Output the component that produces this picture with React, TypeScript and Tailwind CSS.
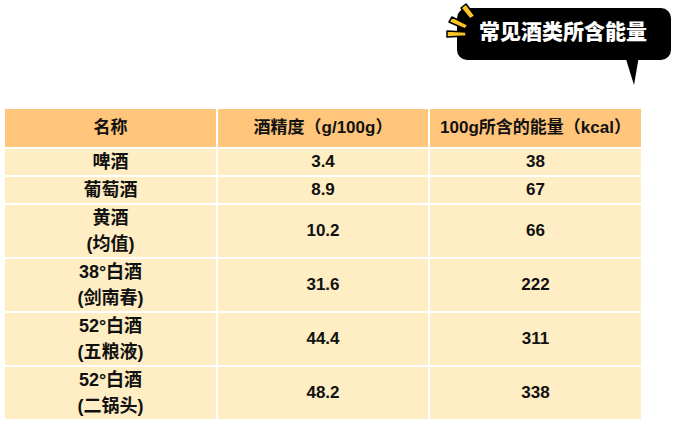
import React from "react";

const font = { fontFamily: '"Liberation Sans", "Noto Sans CJK SC", sans-serif' };

type Row = { name: string[]; abv: string; kcal: string };

const rows: Row[] = [
  { name: ["啤酒"], abv: "3.4", kcal: "38" },
  { name: ["葡萄酒"], abv: "8.9", kcal: "67" },
  { name: ["黄酒", "(均值)"], abv: "10.2", kcal: "66" },
  { name: ["38°白酒", "(剑南春)"], abv: "31.6", kcal: "222" },
  { name: ["52°白酒", "(五粮液)"], abv: "44.4", kcal: "311" },
  { name: ["52°白酒", "(二锅头)"], abv: "48.2", kcal: "338" },
];

export default function App() {
  return (
    <div className="w-[679px] h-[426px] bg-white text-[#111] font-bold overflow-hidden" style={font}>
      <div className="h-[109px] flex justify-end">
        <div className="relative w-[239px] h-[109px]">
          <svg className="absolute left-0 top-0" width="239" height="100" viewBox="0 0 239 100">
            <rect x="17" y="8" width="214" height="52" rx="10" fill="#000" />
            <polygon points="185,56 199,56 194,85" fill="#000" />
            <polygon points="21,8 26,4 35,16 30,19" fill="#F9C623" stroke="#000" strokeWidth="1.5" strokeLinejoin="round" />
            <polygon points="9,22 12,17 28,25 25,29" fill="#F9C623" stroke="#000" strokeWidth="1.5" strokeLinejoin="round" />
            <polygon points="7,31 26,32 26,36 7,37" fill="#F9C623" stroke="#000" strokeWidth="1.5" strokeLinejoin="round" />
          </svg>
          <div className="absolute left-[39px] top-[20px] text-white text-[21px] leading-[24px] whitespace-nowrap font-black">
            常见酒类所含能量
          </div>
        </div>
      </div>
      <div className="ml-[5px] w-[636px] grid grid-cols-[211px_210px_211px] gap-[2px] bg-white">
        <div className="bg-[#FFC57A] h-[38px] flex items-center justify-center text-[17px]">名称</div>
        <div className="bg-[#FFC57A] h-[38px] flex items-center justify-center text-[17px]">酒精度（g/100g）</div>
        <div className="bg-[#FFC57A] h-[38px] flex items-center justify-center text-[17px]">100g所含的能量（kcal）</div>
        {rows.map((r, i) => (
          <React.Fragment key={i}>
            <div className="bg-[#FFEDC3] flex flex-col items-center justify-center text-[18px] leading-[26px]">
              {r.name.map((n, j) => (
                <span key={j}>{n}</span>
              ))}
            </div>
            <div className="bg-[#FFEDC3] flex items-center justify-center text-[17px]">{r.abv}</div>
            <div className="bg-[#FFEDC3] flex items-center justify-center text-[17px]">{r.kcal}</div>
          </React.Fragment>
        ))}
      </div>
    </div>
  );
}
